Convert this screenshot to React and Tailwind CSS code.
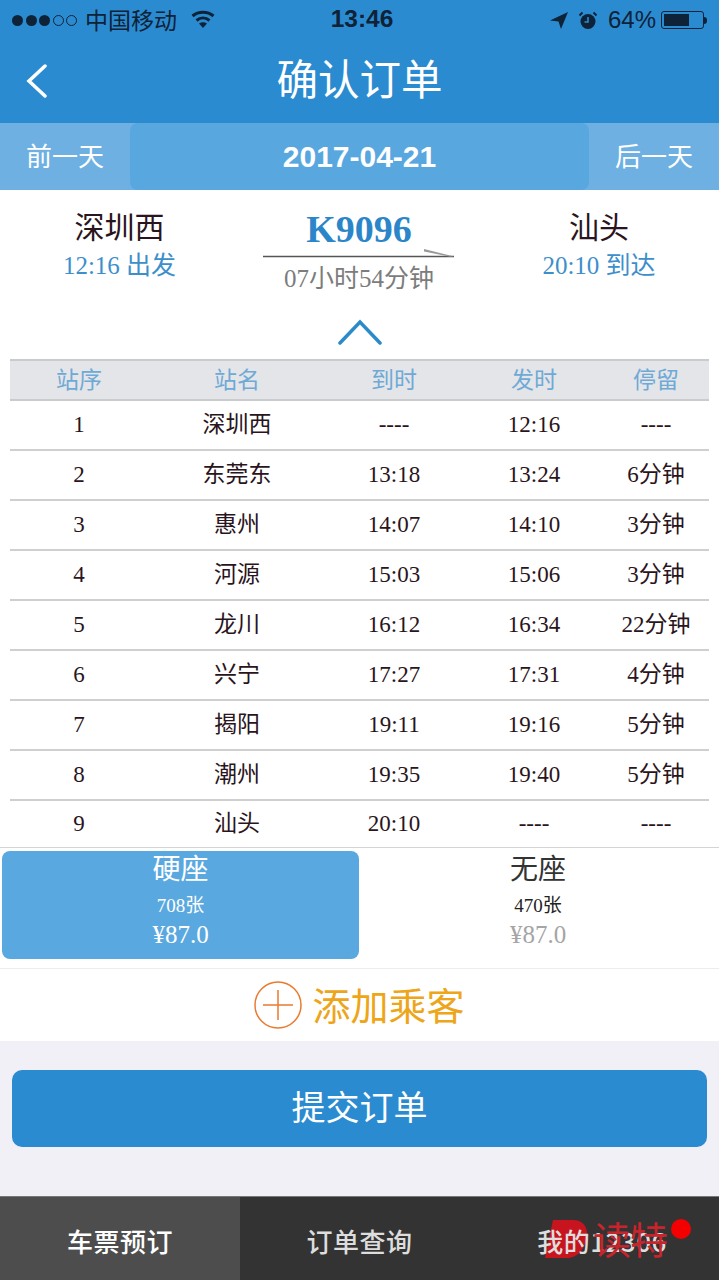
const cjk = { sans: "font-['Noto_Sans_CJK_SC',sans-serif]" };

const stops = [
  ["1", "深圳西", "----", "12:16", "----"],
  ["2", "东莞东", "13:18", "13:24", "6分钟"],
  ["3", "惠州", "14:07", "14:10", "3分钟"],
  ["4", "河源", "15:03", "15:06", "3分钟"],
  ["5", "龙川", "16:12", "16:34", "22分钟"],
  ["6", "兴宁", "17:27", "17:31", "4分钟"],
  ["7", "揭阳", "19:11", "19:16", "5分钟"],
  ["8", "潮州", "19:35", "19:40", "5分钟"],
  ["9", "汕头", "20:10", "----", "----"],
];

const cols = "grid grid-cols-[138px_178px_136px_144px_103px] text-center";

function StatusBar() {
  return (
    <div className="h-[40px] flex items-center pl-[12px] text-[#0e2238] font-['Liberation_Sans','Noto_Sans_CJK_SC',sans-serif]">
      <div className="flex items-center gap-[2.500px] w-[65px]">
        <span className="w-[11px] h-[11px] rounded-full bg-[#0e2238]" />
        <span className="w-[11px] h-[11px] rounded-full bg-[#0e2238]" />
        <span className="w-[11px] h-[11px] rounded-full bg-[#0e2238]" />
        <span className="w-[11px] h-[11px] rounded-full border border-[#0e2238]" />
        <span className="w-[11px] h-[11px] rounded-full border border-[#0e2238]" />
      </div>
      <span className="text-[23px] leading-[40px] mt-[-3px] ml-[8px] w-[94px] whitespace-nowrap font-['Noto_Sans_CJK_SC',sans-serif]">中国移动</span>
      <svg width="24" height="18" viewBox="0 0 24 18" className="ml-[12px] mt-[-2px]" fill="none" stroke="#0e2238" strokeWidth="3">
        <path d="M1.500 6c6-5 15-5 21 0" />
        <path d="M5.500 10.500c4-3.300 9-3.300 13 0" />
        <path d="M12 18l-4-4.500c2.500-1.600 5.500-1.600 8 0z" fill="#0e2238" stroke="none" />
      </svg>
      <span className="ml-[115px] text-[24.500px] font-bold w-[64px] text-center mt-[-1px]">13:46</span>
      <svg width="20" height="18" viewBox="0 0 20 18" className="ml-[155px]">
        <path d="M19 1L1 9.500l8.500 1L12 18z" fill="#0e2238" />
      </svg>
      <svg width="20" height="19" viewBox="0 0 20 19" className="ml-[9px]">
        <circle cx="10" cy="10.500" r="7.500" fill="#0e2238" />
        <path d="M10 6v5h-3.500" stroke="#2b8bd0" strokeWidth="1.600" fill="none" />
        <path d="M1.500 4.500l3-3M18.500 4.500l-3-3" stroke="#0e2238" strokeWidth="2" />
      </svg>
      <span className="ml-[10px] text-[24px] w-[53px] whitespace-nowrap">64%</span>
      <div className="flex items-center">
        <div className="w-[43px] h-[18px] border border-[#0e2238] rounded-[3px] p-[2px]">
          <div className="w-[25px] h-full bg-[#0e2238]" />
        </div>
        <div className="w-[3px] h-[7px] bg-[#0e2238] rounded-r" />
      </div>
    </div>
  );
}

function Route() {
  return (
    <div className="h-[115px] bg-white rounded-[10px] flex font-['Liberation_Serif','Noto_Sans_CJK_SC',serif]">
      <div className="w-[239px] text-center pt-[18px]">
        <div className="text-[30px] leading-[40px] text-[#2a1420]">深圳西</div>
        <div className="text-[25px] leading-[36px] text-[#3d8fcb]">12:16 出发</div>
      </div>
      <div className="w-[240px] flex flex-col items-center pt-[16px]">
        <div className="text-[38px] leading-[46px] font-bold text-[#2b85c9]">K9096</div>
        <svg width="192" height="10" viewBox="0 0 192 10" className="mt-[-4px]" fill="none">
          <path d="M0 8.500h191" stroke="#555" strokeWidth="1.400" />
          <path d="M161 1l30 7.500h-5L161 3.500z" fill="#999" />
        </svg>
        <div className="text-[25px] leading-[36px] text-[#7c7c7c] mt-[3px]">07小时54分钟</div>
      </div>
      <div className="flex-1 text-center pt-[18px]">
        <div className="text-[30px] leading-[40px] text-[#2a1420]">汕头</div>
        <div className="text-[25px] leading-[36px] text-[#3d8fcb]">20:10 到达</div>
      </div>
    </div>
  );
}

function StopTable() {
  return (
    <div className="font-['Liberation_Serif','Noto_Sans_CJK_SC',serif]">
      <div className={`${cols} mx-[10px] h-[42px] pb-[3px] items-center bg-[#e3e5e8] border-y-2 border-[#c9cbcd] text-[23px] text-[#6fa9d6] font-['Noto_Sans_CJK_SC',sans-serif]`}>
        <div>站序</div>
        <div>站名</div>
        <div>到时</div>
        <div>发时</div>
        <div className="pr-[3px]">停留</div>
      </div>
      {stops.map((s, i) => (
        <div
          key={s[0]}
          className={`${cols} mx-[10px] items-center text-[23px] text-[#2a1420] ${i === 8 ? "h-[46px]" : "h-[50px] border-b-2 border-[#cfcfcf]"}`}
        >
          {s.map((cell, j) => (
            <div key={j} className={j === 4 ? "pr-[3px]" : ""}>{cell}</div>
          ))}
        </div>
      ))}
    </div>
  );
}

function Seats() {
  return (
    <div className="h-[122px] border-y border-t-[#d4d4d4] border-b-[#ececec] flex pt-[3px] px-[2px] font-['Liberation_Serif','Noto_Sans_CJK_SC',serif] text-center">
      <div className="w-[357px] h-[108px] bg-[#5aa8e0] rounded-[8px] text-white pt-[1px]">
        <div className="text-[28px] leading-[36px]">硬座</div>
        <div className="text-[19px] leading-[28px] mt-[4px]">708张</div>
        <div className="text-[25px] leading-[30px]">¥87.0</div>
      </div>
      <div className="flex-1 pt-[1px]">
        <div className="text-[28px] leading-[36px] text-[#333]">无座</div>
        <div className="text-[19px] leading-[28px] mt-[4px] text-[#222]">470张</div>
        <div className="text-[25px] leading-[30px] text-[#a5a5a5]">¥87.0</div>
      </div>
    </div>
  );
}

function Watermark() {
  return (
    <div className="absolute left-[590px] top-[1214px] w-[104px] h-[50px]">
      <span className="absolute left-[3px] top-0 text-[38px] leading-[48px] tracking-[-1px] text-[#c8242c] whitespace-nowrap font-['Noto_Sans_CJK_SC',sans-serif]">读特</span>
      <span className="absolute left-[81px] top-[5px] w-[20px] h-[20px] rounded-full bg-[#f40000]" />
    </div>
  );
}

export default function App() {
  return (
    <div className={`relative w-[719px] h-[1280px] overflow-hidden bg-[#f0f0f6] ${cjk.sans}`}>
      <div className="bg-[#2b8bd0] h-[123px]">
        <StatusBar />
        <div className="relative h-[83px] flex items-center justify-center text-white text-[41.500px]">
          <svg width="22" height="34" viewBox="0 0 22 34" fill="none" stroke="white" strokeWidth="3.500" strokeLinecap="round" className="absolute left-[26px] top-[24px]">
            <path d="M19 2L3 17l16 15" />
          </svg>
          <span className="mt-[-9px]">确认订单</span>
        </div>
      </div>
      <div className="h-[67px] bg-[#6eb0e2] flex items-center text-white">
        <div className="w-[130px] text-center text-[26px] mt-[-4px]">前一天</div>
        <div className="w-[459px] h-full bg-[#59a7df] rounded-[8px] flex items-center justify-center text-[30px] font-bold font-['Liberation_Sans',sans-serif]">2017-04-21</div>
        <div className="flex-1 text-center text-[26px] mt-[-4px]">后一天</div>
      </div>
      <div className="bg-white">
        <Route />
        <div className="h-[54px] flex items-center justify-center">
          <svg width="44" height="26" viewBox="0 0 44 26" fill="none" stroke="#2b8bc9" strokeWidth="3.500" strokeLinecap="round">
            <path d="M2 24L22 3l20 21" />
          </svg>
        </div>
        <StopTable />
        <Seats />
        <div className="h-[72px] flex items-center justify-center">
          <svg width="48" height="48" viewBox="0 0 48 48" fill="none" stroke="#ea7a2e" strokeWidth="1.500" className="mt-[-1px]">
            <circle cx="24" cy="24" r="23" />
            <path d="M24 9v30M9 24h30" />
          </svg>
          <span className="ml-[10px] text-[38px] mt-[-3px] text-[#eda519]">添加乘客</span>
        </div>
      </div>
      <div className="mx-[12px] mt-[29px] h-[77px] pb-[7px] bg-[#2b8bd0] rounded-[10px] flex items-center justify-center text-white text-[34px]">提交订单</div>
      <div className="absolute left-0 right-0 bottom-0 h-[84px] border-t border-[#777] bg-[#333333] flex text-[26px] tracking-[0.500px] font-medium text-[#dddddd]">
        <div className="w-[240px] pt-[4px] bg-[#4d4d4d] text-white flex items-center justify-center">车票预订</div>
        <div className="w-[239px] pt-[4px] flex items-center justify-center">订单查询</div>
        <div className="relative flex-1 pt-[4px] pl-[6px] flex items-center justify-center">
          <svg width="42" height="38" viewBox="0 0 42 38" className="absolute left-[66px] top-[23px]">
            <path d="M8 0h20c10 0 15 7 14 16-1 12-9 22-20 22H0z" fill="#c8141e" />
          </svg>
          <span className="relative">我的12306</span>
        </div>
      </div>
      <Watermark />
    </div>
  );
}
